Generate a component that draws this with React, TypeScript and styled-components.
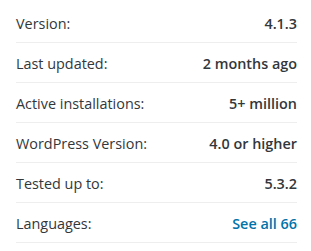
import React from "react";
import styled, { createGlobalStyle } from "styled-components";

const GlobalStyle = createGlobalStyle`
  body {
    margin: 0;
    background: #fff;
    font-family: "Open Sans", "Noto Sans", sans-serif;
  }
`;

type Meta = { label: string; value: string; link?: boolean };

const meta: Meta[] = [
  { label: "Version:", value: "4.1.3" },
  { label: "Last updated:", value: "2 months ago" },
  { label: "Active installations:", value: "5+ million" },
  { label: "WordPress Version:", value: "4.0 or higher" },
  { label: "Tested up to:", value: "5.3.2" },
  { label: "Languages:", value: "See all 66", link: true },
];

const App = () => {
  return (
    <>
      <GlobalStyle />
      <MetaList>
        {meta.map((item) => (
          <MetaRow key={item.label}>
            <Label>{item.label}</Label>
            <Value $link={item.link}>{item.value}</Value>
          </MetaRow>
        ))}
      </MetaList>
    </>
  );
};

export default App;

const MetaList = styled.ul`
  list-style: none;
  margin: 0;
  padding: 3px 0 0 16px;
  width: 281px;
`;

const MetaRow = styled.li`
  display: flex;
  justify-content: space-between;
  align-items: baseline;
  height: 37px;
  padding-top: 2px;
  box-sizing: content-box;
  border-bottom: 1px solid #eeeeee;
  font-size: 14.4px;
  line-height: 37px;
  color: #32373c;
`;

const Label = styled.span`
  font-weight: 400;
`;

const Value = styled.strong<{ $link?: boolean }>`
  font-weight: 600;
  color: ${(p) => (p.$link ? "#0073aa" : "#32373c")};
`;
